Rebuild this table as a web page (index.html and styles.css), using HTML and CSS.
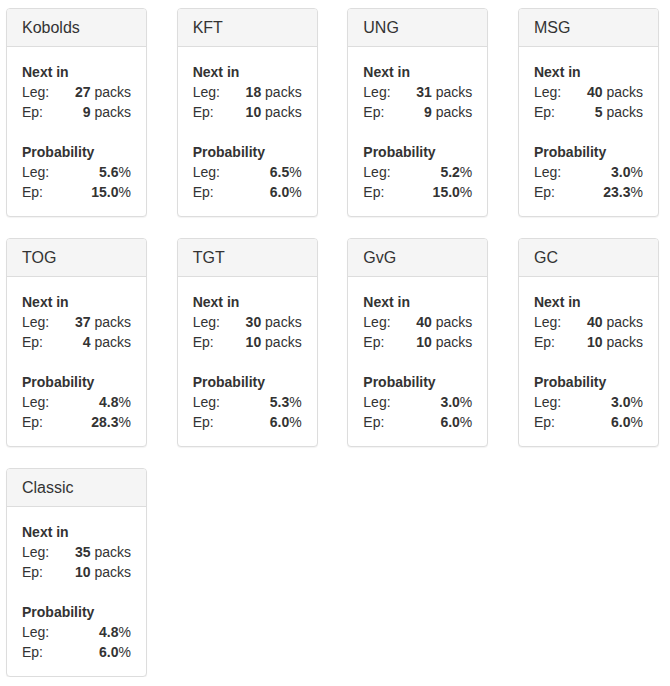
FILE: index.html
```html
<!DOCTYPE html>
<html>
<head>
<meta charset="utf-8">
<link rel="stylesheet" href="styles.css">
</head>
<body>
<div class="grid">
  <div class="panel"><div class="heading">Kobolds</div><div class="body">
    <div class="sub">Next in</div>
    <div class="row"><span>Leg:</span><span><b>27</b> packs</span></div>
    <div class="row"><span>Ep:</span><span><b>9</b> packs</span></div>
    <div class="gap"></div>
    <div class="sub">Probability</div>
    <div class="row"><span>Leg:</span><span><b>5.6</b>%</span></div>
    <div class="row"><span>Ep:</span><span><b>15.0</b>%</span></div>
  </div></div>
  <div class="panel"><div class="heading">KFT</div><div class="body">
    <div class="sub">Next in</div>
    <div class="row"><span>Leg:</span><span><b>18</b> packs</span></div>
    <div class="row"><span>Ep:</span><span><b>10</b> packs</span></div>
    <div class="gap"></div>
    <div class="sub">Probability</div>
    <div class="row"><span>Leg:</span><span><b>6.5</b>%</span></div>
    <div class="row"><span>Ep:</span><span><b>6.0</b>%</span></div>
  </div></div>
  <div class="panel"><div class="heading">UNG</div><div class="body">
    <div class="sub">Next in</div>
    <div class="row"><span>Leg:</span><span><b>31</b> packs</span></div>
    <div class="row"><span>Ep:</span><span><b>9</b> packs</span></div>
    <div class="gap"></div>
    <div class="sub">Probability</div>
    <div class="row"><span>Leg:</span><span><b>5.2</b>%</span></div>
    <div class="row"><span>Ep:</span><span><b>15.0</b>%</span></div>
  </div></div>
  <div class="panel"><div class="heading">MSG</div><div class="body">
    <div class="sub">Next in</div>
    <div class="row"><span>Leg:</span><span><b>40</b> packs</span></div>
    <div class="row"><span>Ep:</span><span><b>5</b> packs</span></div>
    <div class="gap"></div>
    <div class="sub">Probability</div>
    <div class="row"><span>Leg:</span><span><b>3.0</b>%</span></div>
    <div class="row"><span>Ep:</span><span><b>23.3</b>%</span></div>
  </div></div>
  <div class="panel"><div class="heading">TOG</div><div class="body">
    <div class="sub">Next in</div>
    <div class="row"><span>Leg:</span><span><b>37</b> packs</span></div>
    <div class="row"><span>Ep:</span><span><b>4</b> packs</span></div>
    <div class="gap"></div>
    <div class="sub">Probability</div>
    <div class="row"><span>Leg:</span><span><b>4.8</b>%</span></div>
    <div class="row"><span>Ep:</span><span><b>28.3</b>%</span></div>
  </div></div>
  <div class="panel"><div class="heading">TGT</div><div class="body">
    <div class="sub">Next in</div>
    <div class="row"><span>Leg:</span><span><b>30</b> packs</span></div>
    <div class="row"><span>Ep:</span><span><b>10</b> packs</span></div>
    <div class="gap"></div>
    <div class="sub">Probability</div>
    <div class="row"><span>Leg:</span><span><b>5.3</b>%</span></div>
    <div class="row"><span>Ep:</span><span><b>6.0</b>%</span></div>
  </div></div>
  <div class="panel"><div class="heading">GvG</div><div class="body">
    <div class="sub">Next in</div>
    <div class="row"><span>Leg:</span><span><b>40</b> packs</span></div>
    <div class="row"><span>Ep:</span><span><b>10</b> packs</span></div>
    <div class="gap"></div>
    <div class="sub">Probability</div>
    <div class="row"><span>Leg:</span><span><b>3.0</b>%</span></div>
    <div class="row"><span>Ep:</span><span><b>6.0</b>%</span></div>
  </div></div>
  <div class="panel"><div class="heading">GC</div><div class="body">
    <div class="sub">Next in</div>
    <div class="row"><span>Leg:</span><span><b>40</b> packs</span></div>
    <div class="row"><span>Ep:</span><span><b>10</b> packs</span></div>
    <div class="gap"></div>
    <div class="sub">Probability</div>
    <div class="row"><span>Leg:</span><span><b>3.0</b>%</span></div>
    <div class="row"><span>Ep:</span><span><b>6.0</b>%</span></div>
  </div></div>
  <div class="panel"><div class="heading">Classic</div><div class="body">
    <div class="sub">Next in</div>
    <div class="row"><span>Leg:</span><span><b>35</b> packs</span></div>
    <div class="row"><span>Ep:</span><span><b>10</b> packs</span></div>
    <div class="gap"></div>
    <div class="sub">Probability</div>
    <div class="row"><span>Leg:</span><span><b>4.8</b>%</span></div>
    <div class="row"><span>Ep:</span><span><b>6.0</b>%</span></div>
  </div></div>
</div>
</body>
</html>
```
FILE: styles.css
```css
html, body {
  margin: 0;
  padding: 0;
  background: #fff;
}
body {
  font-family: "Liberation Sans", Arial, sans-serif;
  font-size: 14px;
  line-height: 20px;
  color: #333;
}
.grid {
  display: grid;
  grid-template-columns: repeat(4, 141px);
  column-gap: 29.67px;
  row-gap: 21px;
  padding: 8px 0 0 6px;
  align-items: start;
}
.panel {
  border: 1px solid #ddd;
  border-radius: 4px;
  box-shadow: 0 1px 1px rgba(0,0,0,0.05);
  background: #fff;
}
.heading {
  background: #f5f5f5;
  border-bottom: 1px solid #ddd;
  border-radius: 3px 3px 0 0;
  padding: 10px 15px;
  font-size: 16px;
  line-height: 17px;
  color: #333;
}
.body {
  padding: 15px 15px 14px;
}
.sub {
  font-weight: bold;
}
.row {
  display: flex;
  justify-content: space-between;
}
.gap {
  height: 20px;
}
b {
  font-weight: bold;
}
```
